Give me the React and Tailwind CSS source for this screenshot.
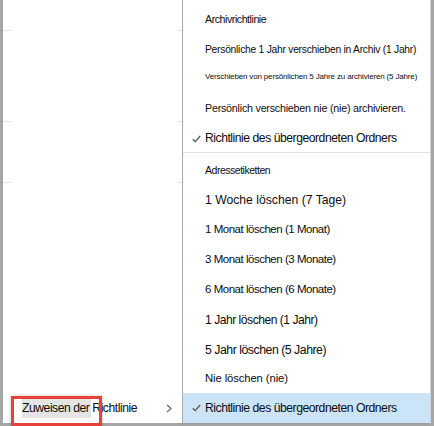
const ROWS = [
  { label: 'Archivrichtlinie', cls: 'h-[38px] text-[10.7px]' },
  { label: 'Persönliche 1 Jahr verschieben in Archiv (1 Jahr)', cls: 'h-[24px] text-[10.3px] tracking-[-0.025em]' },
  { label: 'Verschieben von persönlichen 5 Jahre zu archivieren (5 Jahre)', cls: 'h-[30px] text-[8px] tracking-[-0.02em]' },
  { label: 'Persönlich verschieben nie (nie) archivieren.', cls: 'h-[33px] text-[10.7px] tracking-[-0.02em]' },
  { label: 'Richtlinie des übergeordneten Ordners', cls: 'h-[27px] text-[12.2px]', check: true },
  { sep: true },
  { label: 'Adressetiketten', cls: 'h-[32px] pt-[3px] text-[10.5px]' },
  { label: '1 Woche löschen (7 Tage)', cls: 'h-[30px] text-[12.2px] tracking-normal' },
  { label: '1 Monat löschen (1 Monat)', cls: 'h-[30px] text-[11.5px]' },
  { label: '3 Monat löschen (3 Monate)', cls: 'h-[30px] text-[11.5px]' },
  { label: '6 Monat löschen (6 Monate)', cls: 'h-[30px] text-[11.5px]' },
  { label: '1 Jahr löschen (1 Jahr)', cls: 'h-[30px] text-[12.1px]' },
  { label: '5 Jahr löschen (5 Jahre)', cls: 'h-[30px] text-[12.3px]' },
  { label: 'Nie löschen (nie)', cls: 'h-[28px] text-[11.3px] tracking-[-0.01em]' },
  { label: 'Richtlinie des übergeordneten Ordners', cls: 'h-[30px] text-[12.2px] bg-[#cce4f7]', check: true },
]

function Check() {
  return (
    <svg width="9" height="8" viewBox="0 0 9 8" className="block">
      <polyline points="0.8,4.2 3.2,6.6 8.2,1" fill="none" stroke="#555" strokeWidth="1.3" />
    </svg>
  )
}

function Stub() {
  return (
    <div className="flex justify-between h-px shrink-0">
      <div className="w-[9px] bg-[#e4e4e4]" />
      <div className="w-[5px] bg-[#e4e4e4]" />
    </div>
  )
}

export default function App() {
  return (
    <div className="w-[434px] h-[426px] bg-[#a6a6a6] px-[3px] pb-[3px] flex font-['Liberation_Sans',Arial,sans-serif] text-[#0d0d0d] leading-none tracking-[-0.03em]">
      {/* Left list */}
      <div className="relative w-[179px] bg-white flex flex-col">
        <div className="h-[30px] shrink-0" />
        <Stub />
        <div className="h-[90px] shrink-0" />
        <Stub />
        <div className="h-[60px] shrink-0" />
        <Stub />
        <div className="flex-1" />
        <div className="relative h-[30px] flex items-center pl-[19px] pr-[10px] shrink-0">
          <span className="absolute left-[19px] top-[5px] h-[20px] w-[69px] bg-[#e4e4e4]" />
          <span className="relative text-[12.2px]">Zuweisen der Richtlinie</span>
          <svg width="6" height="9" viewBox="0 0 6 9" className="ml-auto">
            <polyline points="1,1 5,4.5 1,8" fill="none" stroke="#666" strokeWidth="1.2" />
          </svg>
        </div>
        {/* annotation box */}
        <div className="absolute left-[8px] top-[396px] w-[91px] h-[30px] border-[3px] border-[#e8413c] shadow-[0_0_3px_rgba(0,0,0,0.25)]" />
      </div>

      {/* Submenu */}
      <div className="w-[249px] bg-white border-l border-l-[#a9a9a9] border-r border-r-[#d4d4d4] shadow-[-3px_0_4px_rgba(0,0,0,0.12)] flex flex-col">
        {ROWS.map((r, i) =>
          r.sep ? (
            <div key={i} className="h-px bg-[#e2e2e2] shrink-0" />
          ) : (
            <div key={i} className={`flex items-center pl-[9px] shrink-0 whitespace-nowrap ${r.cls}`}>
              <span className="w-[13px] flex">{r.check && <Check />}</span>
              <span>{r.label}</span>
            </div>
          )
        )}
      </div>
    </div>
  )
}
